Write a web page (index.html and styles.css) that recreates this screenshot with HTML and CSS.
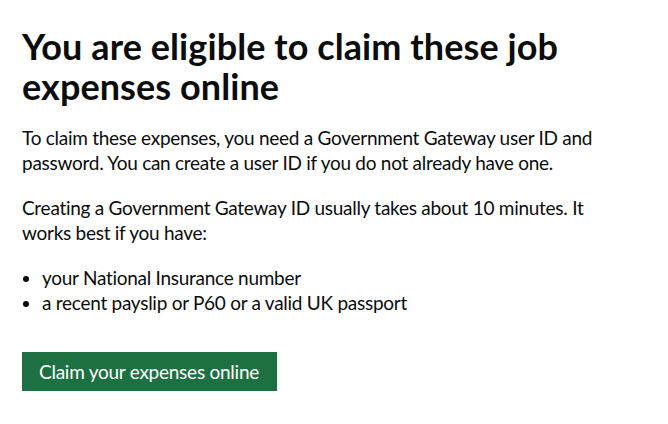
FILE: index.html
```html
<!DOCTYPE html>
<html lang="en">
<head>
<meta charset="utf-8">
<title>Claim job expenses</title>
<link rel="stylesheet" href="styles.css">
</head>
<body>
<main class="page">
  <h1 class="heading">You are eligible to claim these job expenses online</h1>
  <p class="body">To claim these expenses, you need a Government Gateway user ID and password. You can create a user ID if you do not already have one.</p>
  <p class="body">Creating a Government Gateway ID usually takes about 10 minutes. It works best if you have:</p>
  <ul class="list">
    <li>your National Insurance number</li>
    <li>a recent payslip or P60 or a valid UK passport</li>
  </ul>
  <a class="button" href="#">Claim your expenses online</a>
</main>
</body>
</html>
```
FILE: styles.css
```css
html, body {
  margin: 0;
  padding: 0;
  background: #ffffff;
}
body {
  font-family: Lato, "Liberation Sans", Arial, sans-serif;
  color: #0b0c0c;
}
.page {
  padding: 26px 22px 0 22px;
  width: 610px;
}
.heading {
  margin: 0 0 19px 0;
  font-size: 36px;
  line-height: 40px;
  font-weight: 700;
  letter-spacing: 0.08px;
}
.body {
  margin: 0 0 20px 0;
  font-size: 19px;
  line-height: 25px;
  letter-spacing: -0.27px;
}
.list {
  margin: 0 0 37px 0;
  padding: 0 0 0 20px;
  font-size: 19px;
  line-height: 25px;
  letter-spacing: -0.27px;
  list-style: disc;
}
.button {
  display: inline-block;
  box-sizing: border-box;
  width: 255px;
  height: 39px;
  padding: 9px 17px 0 17px;
  background: #1d7041;
  box-shadow: 0 3px 0 #002d18;
  color: #ffffff;
  font-size: 19px;
  line-height: 22px;
  letter-spacing: -0.25px;
  text-decoration: none;
  white-space: nowrap;
}
```
